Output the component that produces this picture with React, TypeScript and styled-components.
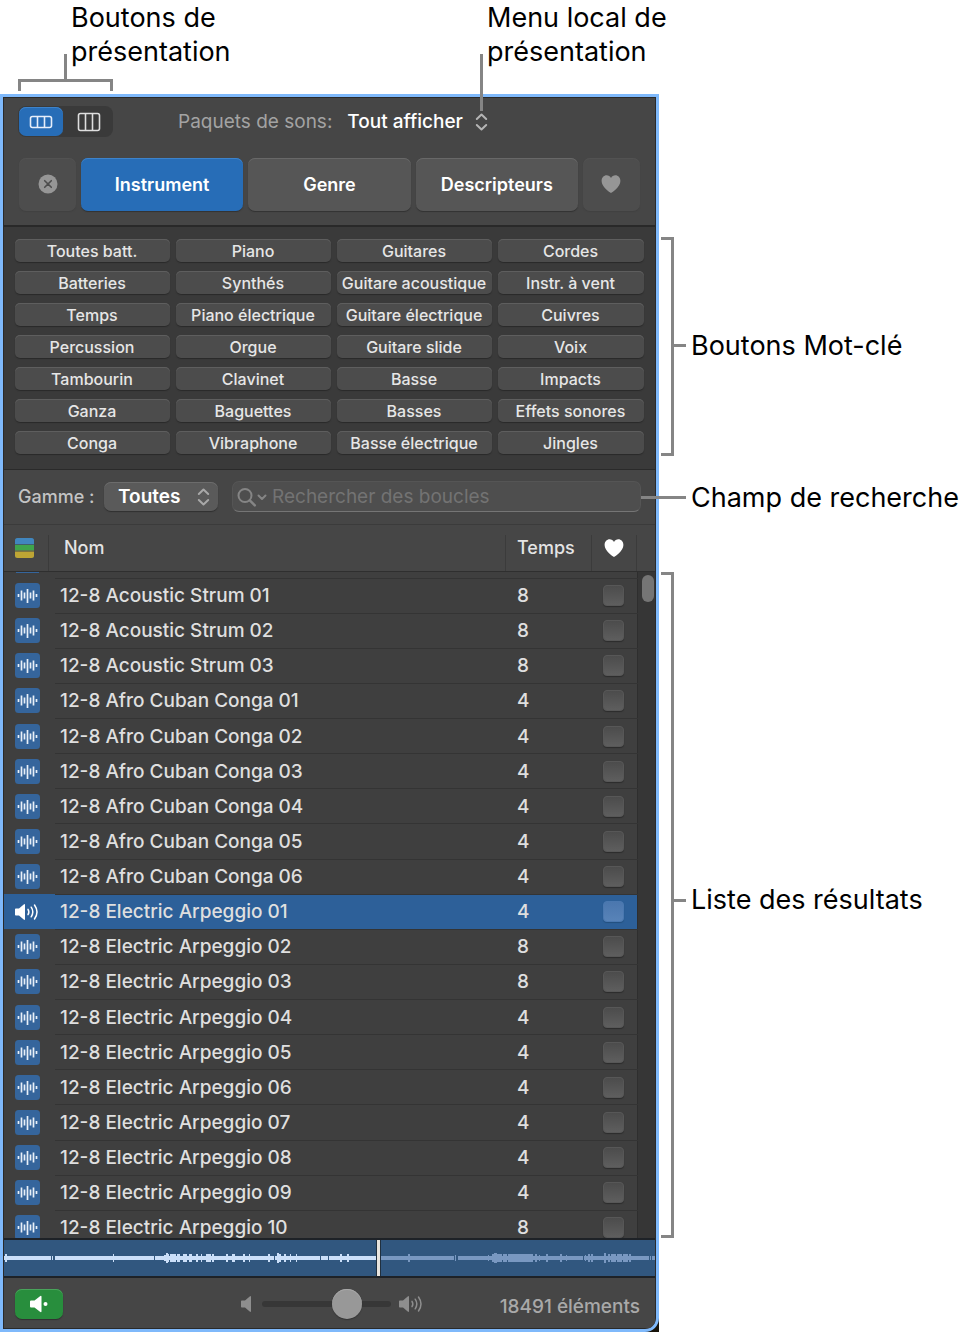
import React, { useState } from "react";
import styled, { createGlobalStyle, css } from "styled-components";

const GlobalStyle = createGlobalStyle`
  *, *::before, *::after { box-sizing: border-box; }
  body {
    margin: 0;
    background: #fff;
    color: #000;
    font-family: Inter, "Liberation Sans", sans-serif;
  }
  button, input, select { font: inherit; color: inherit; margin: 0; }
`;

const RULE = "#858585";

/* ---------- page and callouts ---------- */

const Page = styled.div`
  display: grid;
  grid-template-columns: minmax(0, 1fr) 315px;
  grid-template-rows: 94px auto auto auto minmax(0, 1fr) auto auto;
  height: 100vh;
  min-height: 900px;
  padding-bottom: 1px;
`;

const TopCallouts = styled.header`
  grid-column: 1 / -1;
  display: grid;
  grid-template-columns: 416px 1fr;
  padding: 1px 0 0 71px;
`;

const CalloutText = styled.p`
  position: relative;
  margin: 0;
  font-size: 27px;
  line-height: 34px;
  white-space: nowrap;
`;

const TopBracket = styled.span`
  position: absolute;
  left: -53px;
  top: 78px;
  width: 95px;
  height: 12px;
  border: 3px solid ${RULE};
  border-bottom: 0;
  &::before {
    content: "";
    position: absolute;
    left: 43px;
    bottom: 100%;
    width: 3px;
    height: 28px;
    background: ${RULE};
  }
`;

const MenuLeader = styled.span`
  position: absolute;
  z-index: 2;
  left: -7px;
  top: 53px;
  width: 3px;
  height: 57px;
  background: ${RULE};
`;

const SideCallout = styled.aside<{ $row: number; $top?: number; $bottom?: number }>`
  grid-column: 2;
  grid-row: ${(p) => p.$row};
  display: flex;
  align-items: center;
  margin-top: ${(p) => p.$top ?? 0}px;
  margin-bottom: ${(p) => p.$bottom ?? 0}px;
  padding-left: 2px;
`;

const SideBracket = styled.span`
  align-self: stretch;
  width: 13px;
  border: 3px solid ${RULE};
  border-left: 0;
`;

const SideLabel = styled.div<{ $raise: number }>`
  display: flex;
  align-items: center;
  padding-bottom: ${(p) => p.$raise}px;
`;

const Tick = styled.span`
  width: 12px;
  height: 3px;
  margin-right: 5px;
  background: ${RULE};
`;

const SearchLeader = styled.span`
  position: relative;
  z-index: 2;
  width: 45px;
  height: 3px;
  margin: 0 5px 0 -20px;
  background: ${RULE};
`;

/* ---------- panel ---------- */

const Corner = styled.span`
  grid-column: 1;
  grid-row: 7;
  justify-self: end;
  align-self: end;
  width: 14px;
  height: 14px;
  background: #17130a;
`;

const Panel = styled.main`
  grid-column: 1;
  grid-row: 2 / 8;
  display: grid;
  grid-template-rows: subgrid;
  grid-template-columns: minmax(0, 1fr);
  border: 3px solid #7fb9fb;
  border-radius: 0 0 14px 0;
  padding: 1px;
  background: #2a2a2a;
  overflow: hidden;
  color: #e2e2e2;
`;

const Toolbar = styled.section`
  display: grid;
  row-gap: 21px;
  padding: 8px 15px 14px;
  background: #464646;
  border-bottom: 2px solid #292929;
`;

const ToolbarRow = styled.div`
  display: flex;
  align-items: center;
  margin-left: -1px;
`;

const ViewSwitch = styled.div`
  display: flex;
  height: 31px;
  padding: 1px;
  border-radius: 8px;
  background: #3a3a3a;
`;

const ViewButton = styled.button<{ $active: boolean }>`
  display: grid;
  place-items: center;
  width: 44px;
  padding: 0;
  border: 0;
  border-radius: 7px;
  background: ${(p) => (p.$active ? "#276db7" : "transparent")};
  box-shadow: ${(p) => (p.$active ? "inset 0 1px #3d83cb" : "none")};
  &:last-child { width: 49px; padding-left: 2px; }
`;

const PackLabel = styled.label`
  margin-left: 65px;
  font-size: 19px;
  color: #a3a3a3;
  white-space: nowrap;
`;

const PopUp = styled.span`
  position: relative;
  display: inline-flex;
  align-items: center;
  svg {
    position: absolute;
    right: 8px;
    pointer-events: none;
  }
`;

const PackSelect = styled.select`
  appearance: none;
  width: 150px;
  height: 30px;
  margin-left: 14px;
  padding: 0 0 0 1px;
  border: 0;
  background: transparent;
  font-size: 19px;
  font-weight: 500;
  color: #fff;
`;

const Categories = styled.div`
  display: grid;
  grid-template-columns: 57px 1fr 1fr 1fr 57px;
  column-gap: 5px;
`;

const CategoryButton = styled.button<{ $kind?: "active" | "quiet" }>`
  display: grid;
  place-items: center;
  height: 53px;
  padding: 0 0 1px;
  border: 0;
  border-radius: 7px;
  font-size: 18px;
  font-weight: 600;
  color: #fff;
  background: #565656;
  box-shadow: inset 0 1px #686868, 0 1px 1px #323232;
  ${(p) =>
    p.$kind === "active" &&
    css`
      background: #276db7;
      box-shadow: inset 0 1px #3d83cb, 0 1px 1px #323232;
    `}
  ${(p) =>
    p.$kind === "quiet" &&
    css`
      background: #4d4d4d;
      box-shadow: inset 0 1px #525252, 0 1px 1px #414141;
    `}
`;

const Keywords = styled.section`
  display: grid;
  grid-template-columns: 155fr 155fr 155fr 146fr;
  gap: 9px 6px;
  padding: 12px 11px 15px;
  background: #3a3a3a;
  border-bottom: 1px solid #2a2a2a;
`;

const KeywordButton = styled.button`
  height: 23px;
  padding: 1px 1px 0 0;
  border: 0;
  border-radius: 5px;
  background: #4c4c4c;
  box-shadow: inset 0 1px #5e5e5e, 0 1px 1px #2a2a2a;
  font-size: 16px;
  font-weight: 500;
  line-height: 22px;
  color: #e6e6e6;
  white-space: nowrap;
`;

const SearchBar = styled.section`
  display: flex;
  align-items: center;
  padding: 11px 14px 12px;
  background: #464646;
  border-bottom: 1px solid #3b3b3b;
`;

const ScaleLabel = styled.label`
  width: 86px;
  padding-bottom: 1px;
  font-size: 18px;
  font-weight: 500;
  color: #c4c4c4;
  white-space: nowrap;
`;

const ScaleSelect = styled.select`
  appearance: none;
  width: 114px;
  height: 29px;
  padding: 0 0 1px 14px;
  border: 0;
  border-radius: 7px;
  background: #5a5a5a;
  box-shadow: inset 0 1px #6c6c6c, 0 1px 1px #303030;
  font-size: 19px;
  font-weight: 600;
  color: #fff;
`;

const SearchField = styled.div`
  position: relative;
  flex: 1;
  display: flex;
  margin-left: 14px;
  svg {
    position: absolute;
    left: 5px;
    top: 6px;
  }
`;

const SearchInput = styled.input`
  width: 100%;
  height: 31px;
  padding: 0 10px 0 39px;
  border: 1px solid #555;
  border-bottom-color: #757575;
  border-radius: 7px;
  background: #4e4e4e;
  font-size: 19px;
  &::placeholder { color: #737373; opacity: 1; }
`;

/* ---------- results ---------- */

const Results = styled.section`
  position: relative;
  overflow: hidden;
  background: #3f3f3f;
`;

const ResultTable = styled.table`
  width: 100%;
  height: calc(100% + 8px);
  border-collapse: collapse;
  table-layout: fixed;
`;

const HeadCell = styled.th<{ $pad?: number; $sep?: number }>`
  position: relative;
  height: 46px;
  padding: 0 0 0 ${(p) => p.$pad ?? 0}px;
  border-bottom: 1px solid #2f2f2f;
  background: #464646;
  text-align: left;
  font-size: 18px;
  font-weight: 500;
  color: #e4e4e4;
  svg { display: block; }
  ${(p) =>
    p.$sep !== undefined &&
    css`
      &::after {
        content: "";
        position: absolute;
        right: ${p.$sep}px;
        top: 10px;
        bottom: 0;
        width: 1px;
        background: #3b3b3b;
      }
    `}
`;

const Row = styled.tr<{ $selected?: boolean }>`
  background: ${(p) => (p.$selected ? "#2d6099" : "transparent")};
`;

const Cell = styled.td<{ $pad?: number }>`
  padding: 0 0 0 ${(p) => p.$pad ?? 0}px;
  border-bottom: 1px solid #343434;
  font-size: 19px;
  font-weight: 500;
  color: #dfdfdf;
  white-space: nowrap;
`;

const IconCell = styled.td`
  height: 35px;
  padding: 0 0 0 11px;
  svg { display: block; }
`;

const TrackCell = styled.td`
  padding: 0;
  background: #363636;
  border-left: 1px solid #2e2e2e;
`;

const ScrolledRow = styled.tr`
  height: 7px;
`;

const ScrolledIcon = styled.td`
  padding: 0 16px 0 12px;
  vertical-align: top;
  &::before {
    content: "";
    display: block;
    height: 1px;
    width: 23px;
    background: #35659c;
  }
`;

const Thumb = styled.span`
  position: absolute;
  right: 1px;
  top: 50px;
  width: 12px;
  height: 27px;
  border-radius: 6px;
  background: #757575;
`;

const Favorite = styled.input<{ $selected?: boolean }>`
  appearance: none;
  display: block;
  width: 21px;
  height: 21px;
  border-radius: 4px;
  border: 1px solid ${(p) => (p.$selected ? "#4a78b0" : "#575757")};
  background: ${(p) =>
    p.$selected
      ? "linear-gradient(#4b77ae, #5883b8)"
      : "linear-gradient(#4c4c4c, #5e5e5e)"};
  box-shadow: 0 1px 1px ${(p) => (p.$selected ? "#23507f" : "#2c2c2c")};
`;

/* ---------- preview and footer ---------- */

const Preview = styled.div`
  height: 40px;
  border: solid #1e2227;
  border-width: 2px 0;
  background: #31577f;
  svg { display: block; width: 100%; height: 36px; }
`;

const Footer = styled.footer`
  display: flex;
  align-items: center;
  padding: 11px 15px 9px 11px;
  background: #464646;
`;

const PlayButton = styled.button`
  display: grid;
  place-items: center;
  width: 48px;
  height: 30px;
  padding: 0;
  border: 0;
  border-radius: 7px;
  background: #288e3d;
  box-shadow: inset 0 1px #49a35b, 0 1px 1px #303030;
`;

const Volume = styled.div`
  display: flex;
  align-items: center;
  gap: 8px;
  margin: 0 75px 0 auto;
`;

const VolumeSlider = styled.input`
  appearance: none;
  width: 129px;
  height: 30px;
  background: transparent;
  &::-webkit-slider-runnable-track {
    height: 6px;
    border-radius: 3px;
    background: #373737;
  }
  &::-webkit-slider-thumb {
    appearance: none;
    width: 30px;
    height: 30px;
    margin-top: -12px;
    border-radius: 50%;
    background: #989898;
    box-shadow: inset 0 1px #a9a9a9, 0 1px 1px #333;
  }
`;

const Count = styled.span`
  padding-top: 4px;
  font-size: 19px;
  font-weight: 500;
  color: #a9a9a9;
`;

/* ---------- icons ---------- */

const CompactIcon = () => (
  <svg width="24" height="14" viewBox="0 0 24 14" fill="none" stroke="#e6eefa" strokeWidth="1.6">
    <rect x="1.5" y="1.5" width="21" height="11" rx="2" />
    <path d="M8.5 1.5v11M15.5 1.5v11" />
  </svg>
);

const ColumnsIcon = () => (
  <svg width="24" height="20" viewBox="0 0 24 20" fill="none" stroke="#dedede" strokeWidth="1.6">
    <rect x="1.5" y="1.5" width="21" height="17" rx="2" />
    <path d="M8.5 1.5v17M15.5 1.5v17" />
  </svg>
);

const UpDown = ({ color = "#b5b5b5" }: { color?: string }) => (
  <svg width="13" height="18" viewBox="0 0 13 18" fill="none" stroke={color} strokeWidth="2" strokeLinecap="round" strokeLinejoin="round">
    <path d="M1.8 6 6.5 1.5 11.2 6M1.8 12l4.7 4.5 4.7-4.5" />
  </svg>
);

const ClearIcon = () => (
  <svg width="20" height="20" viewBox="0 0 20 20">
    <circle cx="10" cy="10" r="9.5" fill="#969696" />
    <path d="m6.7 6.7 6.6 6.6m0-6.6-6.6 6.6" stroke="#4d4d4d" strokeWidth="1.6" strokeLinecap="round" />
  </svg>
);

const Heart = ({ color }: { color: string }) => (
  <svg width="20" height="18" viewBox="0 0 20 18" fill={color}>
    <path d="M10 18C8.700 17 .6 12 .6 5.900.6 2.600 2.900.3 5.600.3 7.500.3 9.100 1.300 10 3 10.900 1.300 12.500.3 14.400.3c2.700 0 5 2.300 5 5.600C19.400 12 11.300 17 10 18Z" />
  </svg>
);

const SearchIcon = () => (
  <svg width="30" height="22" viewBox="0 0 30 22" fill="none" stroke="#858585" strokeWidth="2" strokeLinecap="round" strokeLinejoin="round">
    <circle cx="8" cy="8.500" r="6.500" />
    <path d="m12.800 13.300 5 5" strokeWidth="2.500" />
    <path d="m21.500 8.500 3.500 3.500 3.500-3.500" />
  </svg>
);

const LoopTypes = () => (
  <svg width="19" height="20" viewBox="0 0 19 20">
    <rect width="19" height="20" rx="2.500" fill="#41606a" />
    <path d="M0 6V2.500A2.500 2.500 0 0 1 2.500 0h14A2.500 2.500 0 0 1 19 2.500V6Z" fill="#4186be" />
    <path d="M0 7h19v5.500H0Z" fill="#3fa54c" />
    <path d="M0 12.500h19V14H0Z" fill="#7c7440" />
    <path d="M0 14h19v3.500a2.500 2.500 0 0 1-2.500 2.500h-14A2.500 2.500 0 0 1 0 17.500Z" fill="#bea534" />
  </svg>
);

const AudioLoop = () => (
  <svg width="25" height="25" viewBox="0 0 25 25">
    <rect width="25" height="25" rx="3.500" fill="#35659c" />
    <path
      d="M3.500 11v3M6.500 7.500v10M9.500 9.500v6M12.500 6v14M15.500 9.500v6M18.500 7.500v10M21.500 11v3"
      stroke="#e9f0f8"
      strokeWidth="1.700"
    />
  </svg>
);

const Speaker = ({ color, waves }: { color: string; waves?: boolean }) => (
  <svg width={waves ? 26 : 13} height="18" viewBox={waves ? "0 0 26 18" : "0 0 13 18"} fill={color}>
    <path d="M0 6.300Q0 5.500.8 5.500H4L8.700 1.400Q10 .4 10 2V16Q10 17.600 8.700 16.600L4 12.500H.8Q0 12.500 0 11.700Z" />
    {waves && (
      <path
        d="M13 6.300q1.700 2.700 0 5.400M16.200 4.200q3.200 4.800 0 9.600M19.500 2q5 7 0 14"
        fill="none"
        stroke={color}
        strokeWidth="1.500"
        strokeLinecap="round"
      />
    )}
  </svg>
);

const PreviewIcon = () => (
  <svg width="20" height="18" viewBox="0 0 20 18" fill="#fff">
    <path d="M1 6.500Q1 5.500 2 5.500H5.500L11 1.200Q12.500.3 12.500 1.800V16.200Q12.500 17.700 11 16.800L5.500 12.500H2Q1 12.500 1 11.500Z" />
    <circle cx="16.500" cy="9" r="2" />
  </svg>
);

/* Each entry is [x, width, height] of one piece of the signal. */
type Piece = [number, number, number];

const played: Piece[] = [
  [0, 47, 4], [1, 2, 8], [48, 1, 4], [51, 1, 4], [52, 98, 4], [109, 1, 8], [151, 1, 4],
  [152, 118, 4], [160, 2, 6], [162, 2, 10], [164, 1, 8], [166, 6, 8], [173, 3, 8], [179, 4, 8], [185, 3, 8],
  [192, 2, 8], [197, 1, 8], [202, 5, 8], [208, 2, 8], [222, 2, 8], [228, 3, 8],
  [239, 2, 8], [245, 1, 8], [264, 2, 8], [271, 1, 4], [272, 44, 4], [273, 2, 10], [275, 2, 8],
  [280, 2, 8], [286, 1, 8], [292, 1, 8], [317, 7, 4], [325, 48, 4], [336, 2, 8], [343, 2, 8],
];

const upcoming: Piece[] = [
  [377, 73, 4], [404, 2, 8], [451, 1, 6], [454, 125, 4], [484, 1, 6], [488, 3, 8], [490, 3, 10], [493, 5, 8],
  [499, 4, 8], [504, 6, 8], [510, 16, 8], [526, 3, 8], [531, 2, 8], [535, 1, 6], [542, 2, 8],
  [556, 2, 8], [562, 1, 6], [580, 65, 4], [581, 1, 6], [584, 2, 8], [587, 2, 8], [600, 2, 10],
  [604, 2, 8], [607, 5, 8], [613, 5, 8], [619, 5, 8], [625, 2, 8], [646, 1, 4], [648, 3, 4],
];

const Pieces = ({ items, fill }: { items: Piece[]; fill: string }) => (
  <g fill={fill}>
    {items.map(([x, w, h], i) => (
      <rect key={i} x={x} y={18 - h / 2} width={w} height={h} />
    ))}
  </g>
);

/* ---------- data ---------- */

const keywords = [
  "Toutes batt.", "Piano", "Guitares", "Cordes",
  "Batteries", "Synthés", "Guitare acoustique", "Instr. à vent",
  "Temps", "Piano électrique", "Guitare électrique", "Cuivres",
  "Percussion", "Orgue", "Guitare slide", "Voix",
  "Tambourin", "Clavinet", "Basse", "Impacts",
  "Ganza", "Baguettes", "Basses", "Effets sonores",
  "Conga", "Vibraphone", "Basse électrique", "Jingles",
];

const loops: [string, number][] = [
  ["12-8 Acoustic Strum 01", 8],
  ["12-8 Acoustic Strum 02", 8],
  ["12-8 Acoustic Strum 03", 8],
  ["12-8 Afro Cuban Conga 01", 4],
  ["12-8 Afro Cuban Conga 02", 4],
  ["12-8 Afro Cuban Conga 03", 4],
  ["12-8 Afro Cuban Conga 04", 4],
  ["12-8 Afro Cuban Conga 05", 4],
  ["12-8 Afro Cuban Conga 06", 4],
  ["12-8 Electric Arpeggio 01", 4],
  ["12-8 Electric Arpeggio 02", 8],
  ["12-8 Electric Arpeggio 03", 8],
  ["12-8 Electric Arpeggio 04", 4],
  ["12-8 Electric Arpeggio 05", 4],
  ["12-8 Electric Arpeggio 06", 4],
  ["12-8 Electric Arpeggio 07", 4],
  ["12-8 Electric Arpeggio 08", 4],
  ["12-8 Electric Arpeggio 09", 4],
  ["12-8 Electric Arpeggio 10", 8],
];

export default function App() {
  const [view, setView] = useState(0);
  const [selected, setSelected] = useState(9);

  return (
    <>
      <GlobalStyle />
      <Page>
        <TopCallouts>
          <CalloutText>
            Boutons de
            <br />
            présentation
            <TopBracket />
          </CalloutText>
          <CalloutText>
            Menu local de
            <br />
            présentation
            <MenuLeader />
          </CalloutText>
        </TopCallouts>

        <Corner />
        <Panel>
          <Toolbar>
            <ToolbarRow>
              <ViewSwitch>
                <ViewButton $active={view === 0} aria-label="Boutons" onClick={() => setView(0)}>
                  <CompactIcon />
                </ViewButton>
                <ViewButton $active={view === 1} aria-label="Colonnes" onClick={() => setView(1)}>
                  <ColumnsIcon />
                </ViewButton>
              </ViewSwitch>
              <PackLabel htmlFor="pack">Paquets de sons:</PackLabel>
              <PopUp>
                <PackSelect id="pack">
                  <option>Tout afficher</option>
                </PackSelect>
                <UpDown />
              </PopUp>
            </ToolbarRow>
            <Categories>
              <CategoryButton $kind="quiet" aria-label="Effacer">
                <ClearIcon />
              </CategoryButton>
              <CategoryButton $kind="active">Instrument</CategoryButton>
              <CategoryButton>Genre</CategoryButton>
              <CategoryButton>Descripteurs</CategoryButton>
              <CategoryButton $kind="quiet" aria-label="Favoris">
                <Heart color="#969696" />
              </CategoryButton>
            </Categories>
          </Toolbar>

          <Keywords>
            {keywords.map((k) => (
              <KeywordButton key={k}>{k}</KeywordButton>
            ))}
          </Keywords>

          <SearchBar>
            <ScaleLabel htmlFor="scale">Gamme :</ScaleLabel>
            <PopUp>
              <ScaleSelect id="scale">
                <option>Toutes</option>
              </ScaleSelect>
              <UpDown color="#a8a8a8" />
            </PopUp>
            <SearchField>
              <SearchInput type="text" aria-label="Rechercher" placeholder="Rechercher des boucles" />
              <SearchIcon />
            </SearchField>
          </SearchBar>

          <Results>
            <ResultTable>
              <colgroup>
                <col width="51" />
                <col />
                <col width="86" />
                <col width="45" />
                <col width="18" />
              </colgroup>
              <thead>
                <tr>
                  <HeadCell $pad={11} $sep={6} aria-label="Type"><LoopTypes /></HeadCell>
                  <HeadCell $pad={9} $sep={0}>Nom</HeadCell>
                  <HeadCell $pad={11} $sep={0}>Temps</HeadCell>
                  <HeadCell $pad={12} $sep={0} aria-label="Favori"><Heart color="#fff" /></HeadCell>
                  <HeadCell aria-hidden="true" />
                </tr>
              </thead>
              <tbody>
                <ScrolledRow aria-hidden="true">
                  <ScrolledIcon />
                  <Cell colSpan={3} />
                  <TrackCell />
                </ScrolledRow>
                {loops.map(([name, beats], i) => (
                  <Row key={name} $selected={i === selected} onClick={() => setSelected(i)}>
                    <IconCell>
                      {i === selected ? <Speaker color="#fff" waves /> : <AudioLoop />}
                    </IconCell>
                    <Cell $pad={5}>{name}</Cell>
                    <Cell $pad={11}>{beats}</Cell>
                    <Cell $pad={11}>
                      <Favorite type="checkbox" $selected={i === selected} aria-label={`Favori ${name}`} />
                    </Cell>
                    <TrackCell />
                  </Row>
                ))}
              </tbody>
            </ResultTable>
            <Thumb />
          </Results>

          <Preview>
            <svg viewBox="0 0 651 36" preserveAspectRatio="none" aria-hidden="true">
              <Pieces items={played} fill="#cbdff9" />
              <Pieces items={upcoming} fill="#7998c1" />
              <rect x="372" width="5" height="36" fill="#20303f" />
              <rect x="373" width="3" height="36" fill="#e8e4de" />
            </svg>
          </Preview>

          <Footer>
            <PlayButton aria-label="Écouter"><PreviewIcon /></PlayButton>
            <Volume>
              <Speaker color="#8e8e8e" />
              <VolumeSlider type="range" min={0} max={100} defaultValue={71} aria-label="Volume" />
              <Speaker color="#8e8e8e" waves />
            </Volume>
            <Count>18491 éléments</Count>
          </Footer>
        </Panel>

        <SideCallout $row={3} $top={10} $bottom={14}>
          <SideBracket />
          <SideLabel $raise={2}>
            <Tick />
            <CalloutText>Boutons Mot-clé</CalloutText>
          </SideLabel>
        </SideCallout>
        <SideCallout $row={4}>
          <SearchLeader />
          <CalloutText>Champ de recherche</CalloutText>
        </SideCallout>
        <SideCallout $row={5} $top={47}>
          <SideBracket />
          <SideLabel $raise={10}>
            <Tick />
            <CalloutText>Liste des résultats</CalloutText>
          </SideLabel>
        </SideCallout>
      </Page>
    </>
  );
}
